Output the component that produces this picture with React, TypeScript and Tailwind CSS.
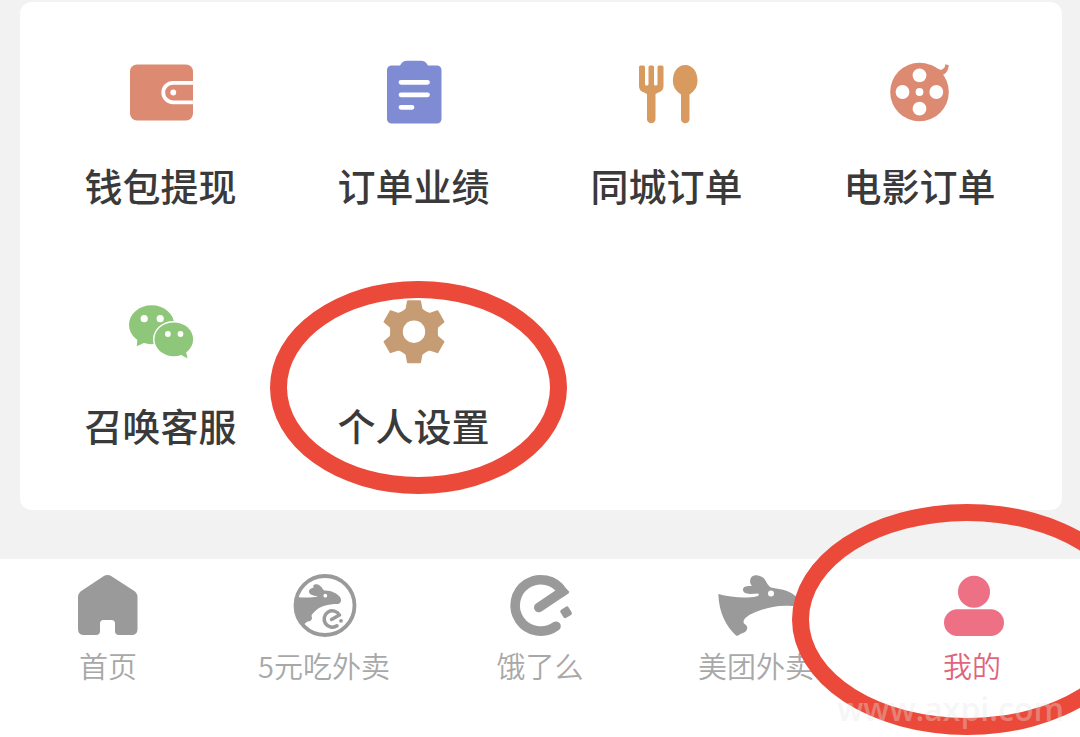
import type { ReactNode } from "react";

type Entry = {
  label: string;
  icon: ReactNode;
  marked?: boolean;
};

const WalletIcon = () => (
  <svg viewBox="0 0 64 64" className="size-16" aria-hidden="true">
    <rect x="1" y="4.5" width="63" height="56" rx="7" fill="#dc8a72" />
    <path
      d="M65 22.8H44a9.7 9.7 0 0 0 0 19.5H65"
      fill="none"
      stroke="#fff"
      strokeWidth="3.8"
    />
    <circle cx="44.3" cy="32.5" r="2.9" fill="#fff" />
  </svg>
);

const ClipboardIcon = () => (
  <svg viewBox="0 0 64 64" className="size-16" aria-hidden="true">
    <path
      d="M9.5 5.5H18C20 2 22 .8 25 .8H39C42 .8 44 2 46 5.5H55a4.500 4.500 0 0 1 4.500 4.500V59a4.500 4.500 0 0 1-4.500 4.500H9.500a4.500 4.500 0 0 1-4.500-4.500V10a4.500 4.500 0 0 1 4.500-4.500z"
      fill="#7f8bd3"
    />
    <path
      d="M19 22.300H45.500M19 34.800H45.500M19 47.300H30"
      stroke="#fff"
      strokeWidth="4.800"
      strokeLinecap="round"
    />
  </svg>
);

const CutleryIcon = () => (
  <svg viewBox="0 0 64 64" className="size-16" aria-hidden="true">
    <g fill="#d89a5e">
      <path d="M4 7q0-1.500 1.500-1.500h3Q10 5.500 10 7V24q0 1.500 1.500 1.500h.5q1.500 0 1.500-1.500V7q0-1.500 1.500-1.500h2.500Q19 5.500 19 7V24q0 1.500 1.500 1.500h.5q1.500 0 1.500-1.500V7q0-1.500 1.500-1.500h3q1.500 0 1.500 1.500V26q0 5-5 6.500l-3 1.500V59a4.200 4.200 0 0 1-8.500 0V34l-3-1.500Q4 31 4 26z" />
      <path d="M50.200 5c7.500 0 12.300 7 12.300 15.500 0 7-3.500 11-8 14V59a4.200 4.200 0 0 1-8.500 0V34.500c-4.500-3-8.100-7-8.100-14C37.900 12 42.700 5 50.200 5z" />
    </g>
  </svg>
);

const ReelIcon = () => (
  <svg viewBox="0 0 64 64" className="size-16" aria-hidden="true">
    <circle cx="31.500" cy="32" r="29.300" fill="#dc8a72" />
    <path
      d="M42 4.500C48 7 51 10.500 54 9.500 56.500 8.700 57 6.500 57.300 4.300L60.800 5.200C60.300 9 59.500 12.500 55.500 14.500L53 15.500z"
      fill="#dc8a72"
    />
    <g fill="#fff">
      <circle cx="31.500" cy="15.300" r="6.900" />
      <circle cx="14.500" cy="32" r="6.900" />
      <circle cx="48.300" cy="32" r="6.900" />
      <circle cx="31.500" cy="48.700" r="6.900" />
      <circle cx="31.500" cy="32" r="3.900" />
    </g>
  </svg>
);

const ChatIcon = () => (
  <svg viewBox="0 0 64 64" className="size-16 overflow-visible" aria-hidden="true">
    <g fill="#8ec67a">
      <ellipse cx="22.600" cy="24.700" rx="22.600" ry="19.500" />
      <path d="M8.500 37 7.800 46.200 17 42z" />
      <ellipse
        cx="44.800"
        cy="39.300"
        rx="19.300"
        ry="16.900"
        stroke="#fff"
        strokeWidth="3"
        paintOrder="stroke"
      />
      <path d="M50.500 54 58.500 58.500 56.500 49z" />
    </g>
    <g fill="#fff">
      <circle cx="15.200" cy="18.700" r="3.600" />
      <circle cx="31.200" cy="18.700" r="3.600" />
      <circle cx="38.900" cy="34" r="2.900" />
      <circle cx="51.500" cy="34" r="2.900" />
    </g>
  </svg>
);

const GearIcon = () => (
  <svg viewBox="0 0 64 64" className="size-16" aria-hidden="true">
    <g transform="translate(32 31.700)" fill="#c69c74">
      <circle r="23.300" />
      {[0, 60, 120, 180, 240, 300].map((angle) => (
        <path
          key={angle}
          transform={`rotate(${angle})`}
          d="M-6-30.500H6L7.500-22.500 12-19V0H-12V-19L-7.500-22.500z"
          stroke="#c69c74"
          strokeWidth="2"
          strokeLinejoin="round"
        />
      ))}
      <circle r="11.200" fill="#fff" />
    </g>
  </svg>
);

const HomeIcon = () => (
  <svg viewBox="0 0 62 62" className="size-[62px]" aria-hidden="true">
    <path
      d="M26.500 1.200Q30.500-1 34.500 1.200L56.500 15.500Q60.500 18 60.500 22V54q0 6-6 6H42q-4 0-4-4V48.500q0-3.500-3.500-3.500H26.500Q23 45 23 48.500V56q0 4-4 4H7q-6 0-6-6V22q0-4 4-6.500z"
      fill="#9a9a9a"
    />
  </svg>
);

const DealIcon = () => (
  <svg viewBox="0 0 62 62" className="size-[62px] overflow-visible" aria-hidden="true">
    <circle cx="32" cy="30.500" r="29.500" fill="none" stroke="#9a9a9a" strokeWidth="3.800" />
    <path
      d="M3.500 22C10 22.500 17 23.300 25 21.500 20 20.500 15.500 19.500 16 16 16.500 13.500 19.500 13 20.500 12.500 19.500 9.500 22 8.500 25 9.500 28 10.500 29.500 14 31 15.500 37 15 44 18 47 22 49 25 48 28.500 45 29 37 29 29 30.500 24 34.500 20 38 17.500 40 19 42.500 19 45 17.500 46.500 14.500 46.500L10 50C3 40 2 31 3.500 22z"
      fill="#9a9a9a"
    />
    <circle cx="32.300" cy="20.700" r="1.900" fill="#fff" />
    <path
      d="M38.500 44.500 46.500 40A8.200 8.200 0 1 0 44 50.800"
      fill="none"
      stroke="#9a9a9a"
      strokeWidth="3.500"
      strokeLinecap="round"
      strokeLinejoin="round"
    />
    <circle cx="48" cy="45.800" r="1.900" fill="#9a9a9a" />
  </svg>
);

const ElemeIcon = () => (
  <svg viewBox="0 0 62 62" className="size-[62px] overflow-visible" aria-hidden="true">
    <path
      d="M47 51.200A25.700 25.700 0 1 1 53.500 16.600L29.800 32.500"
      fill="none"
      stroke="#9a9a9a"
      strokeWidth="9.600"
      strokeLinecap="round"
    />
    <path d="M48 8Q54 10 60.500 17L54 22z" fill="#9a9a9a" />
    <rect
      x="52.300"
      y="32.500"
      width="9.600"
      height="9.600"
      rx="2"
      transform="rotate(-32 57.100 37.300)"
      fill="#9a9a9a"
    />
  </svg>
);

const MeituanIcon = () => (
  <svg viewBox="0 0 80 62" className="h-[62px] w-20 overflow-visible" aria-hidden="true">
    <path
      d="M2.300 19C14 22.500 31 23.500 40 21.500 43 21 43.500 19.500 42 18.500 38 18.500 34 19.800 30 18.300 26 17 26 12.500 29.500 11.500 31.500 10.800 34 11.500 36 10.500 33.500 8.500 33.500 4.500 35.500 2 38-1 44 0 47 2.500 50 5 51 10 55 12.500 60 13.500 66 14 71 16 77 18.500 82 22 82 26.500 82 30 79 31 76 31 62 29.500 50 33 41 36.500 34 39 27.500 43 27.500 47 27.500 49.500 31.500 49.500 31.300 53 31 56 28.500 58 25.500 58.500 23.500 59 22.500 61.500 20 60.500 10 51 3 38 2.300 19z"
      fill="#9a9a9a"
    />
    <circle cx="55" cy="18.500" r="3" fill="#fff" />
  </svg>
);

const ProfileIcon = () => (
  <svg viewBox="0 0 62 62" className="size-[62px] overflow-visible" aria-hidden="true">
    <g fill="#ee7084">
      <circle cx="33" cy="16.700" r="16" />
      <rect x="3" y="34.300" width="60" height="26.700" rx="13.300" />
    </g>
  </svg>
);

const services: Entry[] = [
  { label: "钱包提现", icon: <WalletIcon /> },
  { label: "订单业绩", icon: <ClipboardIcon /> },
  { label: "同城订单", icon: <CutleryIcon /> },
  { label: "电影订单", icon: <ReelIcon /> },
  { label: "召唤客服", icon: <ChatIcon /> },
  { label: "个人设置", icon: <GearIcon />, marked: true },
];

const tabs: Entry[] = [
  { label: "首页", icon: <HomeIcon /> },
  { label: "5元吃外卖", icon: <DealIcon /> },
  { label: "饿了么", icon: <ElemeIcon /> },
  { label: "美团外卖", icon: <MeituanIcon /> },
  { label: "我的", icon: <ProfileIcon />, marked: true },
];

function ServiceCard() {
  return (
    <main className="mt-0.5 mr-[18px] ml-5 rounded-xl bg-white pt-[58px] pr-4 pb-[60px] pl-3.5">
      <ul className="grid grid-cols-4 gap-y-[90px]">
        {services.map(({ label, icon, marked }) => (
          <li key={label} className="relative">
            <a href="#" className="flex flex-col items-center gap-9">
              {icon}
              <span className="text-[38px] leading-[50px] font-medium whitespace-nowrap text-[#3a3a3a]">
                {label}
              </span>
            </a>
            {marked && (
              <span className="pointer-events-none absolute -top-[19px] -left-[17px] h-[213px] w-[297px] rounded-[50%] border-[17px] border-[#eb4a3a]" />
            )}
          </li>
        ))}
      </ul>
    </main>
  );
}

function TabBar() {
  return (
    <nav className="mt-[49px] flex-1 bg-white pb-12">
      <ul className="grid grid-cols-5">
        {tabs.map(({ label, icon, marked }) => (
          <li key={label} className="relative pt-4">
            <a
              href="#"
              aria-current={marked ? "page" : undefined}
              className={
                marked
                  ? "flex flex-col items-center gap-2.5 text-[#e0647c]"
                  : "flex flex-col items-center gap-2.5 text-[#a8a8a8]"
              }
            >
              {icon}
              <span className="text-[29px] leading-9 font-[350] whitespace-nowrap">
                {label}
              </span>
            </a>
            {marked && (
              <span className="pointer-events-none absolute -top-[55px] -left-[72px] h-[231px] w-[350px] rounded-[50%] border-[17px] border-[#eb4a3a]" />
            )}
          </li>
        ))}
      </ul>
    </nav>
  );
}

export default function App() {
  return (
    <div className="relative flex min-h-screen flex-col overflow-hidden bg-[#f2f2f2] font-['Noto_Sans_CJK_SC',sans-serif]">
      <ServiceCard />
      <TabBar />
      <span className="pointer-events-none absolute right-4 bottom-2 font-['Open_Sans',sans-serif] text-[32px] leading-10 font-semibold text-neutral-200/35">
        www.axpi.com
      </span>
    </div>
  );
}
